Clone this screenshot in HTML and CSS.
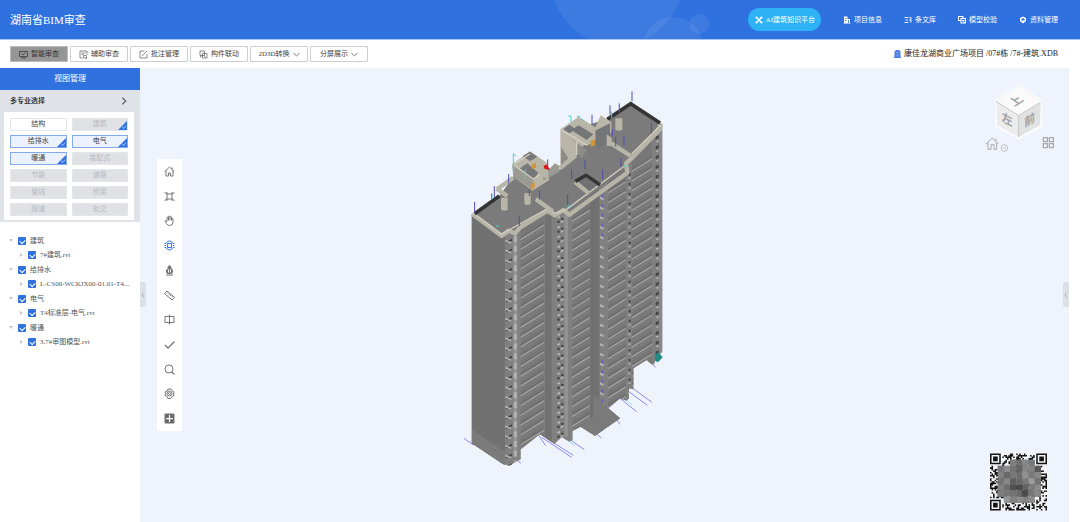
FILE: index.html
```html
<!DOCTYPE html>
<html lang="zh-CN">
<head>
<meta charset="utf-8">
<title>湖南省BIM审查</title>
<link rel="stylesheet" href="styles.css">
</head>
<body>
<header class="header">
  <svg class="header-art" width="170" height="39" viewBox="550 0 170 39" aria-hidden="true"><g fill="#fff" fill-opacity=".07"><circle cx="617" cy="-21" r="66"/><circle cx="673" cy="47" r="30"/><circle cx="699" cy="24" r="10"/></g></svg>
  <h1 class="brand">湖南省BIM审查</h1>
  <nav class="nav">
    <a class="nav-item nav-pill" href="#"><svg class="ic8" viewBox="0 0 16 16"><path d="M3 3l10 10M13 3L3 13" stroke="#fff" stroke-width="2.4"/><circle cx="3" cy="3" r="2.2" fill="#fff"/><circle cx="13" cy="3" r="2.2" fill="#fff"/><circle cx="3" cy="13" r="2.2" fill="#fff"/><circle cx="13" cy="13" r="2.2" fill="#fff"/></svg>AI建筑知识平台</a>
    <a class="nav-item" href="#"><svg class="ic8" viewBox="0 0 16 16"><path fill="#fff" fill-rule="evenodd" d="M2 1h7v5h5v8h1v1H1v-1h1zM4 4v1.500h3V4zM4 8v1.500h3V8zM10.500 8v6h1.500V8z"/></svg>项目信息</a>
    <a class="nav-item" href="#"><svg class="ic8" viewBox="0 0 16 16" fill="none" stroke="#fff" stroke-width="1.800"><path d="M1 3h8M3 8h5M1 13h8M11 3h3v10M10 8h4"/></svg>条文库</a>
    <a class="nav-item" href="#"><svg class="ic8" viewBox="0 0 16 16" fill="none" stroke="#fff" stroke-width="2.200"><path d="M5 9H1V1h9v3M6 5h9v9H6zM8 9h5M10 12h3"/></svg>模型校验</a>
    <a class="nav-item" href="#"><svg class="ic8" viewBox="0 0 16 16"><path fill="#fff" fill-rule="evenodd" d="M8 1l6 3v6l-6 5-6-5V4zM8 4L5 6v3h6V6z"/></svg>资料管理</a>
  </nav>
</header>
<div class="toolbar">
  <div class="tools">
    <button class="tool tool-on" aria-pressed="true"><svg class="ic9" viewBox="0 0 18 18"><path d="M1 3h16v10H1zM4 16h10M5 7l3 3 5-5"/></svg>智能审查</button>
    <button class="tool"><svg class="ic9" viewBox="0 0 18 18"><path d="M7 16H2V2h14v7M5 6h8M5 9h4M14 16l2 2M9 16V11h6v5z"/></svg>辅助审查</button>
    <button class="tool"><svg class="ic9" viewBox="0 0 18 18"><path d="M11 2H2v14h14V8M6 12L16 2"/></svg>批注管理</button>
    <button class="tool"><svg class="ic9" viewBox="0 0 18 18"><path d="M2 2h9v9H2zM7 7h9v9H7zM5 14H3v-3M9 11l4 3"/></svg>构件联动</button>
    <label class="tool"><select class="pick pick-wide" aria-label="2D3D转换"><option>2D3D转换</option></select><svg class="chev" viewBox="0 0 16 10"><path d="M1 2l7 6 7-6"/></svg></label>
    <label class="tool"><select class="pick" aria-label="分屏展示"><option>分屏展示</option></select><svg class="chev" viewBox="0 0 16 10"><path d="M1 2l7 6 7-6"/></svg></label>
  </div>
  <div class="path"><svg width="7" height="8" viewBox="0 0 14 16"><path fill="#4c80e8" d="M1 3l3-3h6l3 3v11h1v2H0v-2h1z"/><path stroke="#8fb0f2" d="M4 5h6M4 8h6M4 11h6"/></svg>康佳龙湖商业广场项目 /07#栋 /7#-建筑.XDB</div>
</div>
<main class="main">
  <aside class="side">
    <h2 class="side-title">视图管理</h2>
    <section class="majors">
      <button class="majors-head">多专业选择<svg width="6" height="8" viewBox="0 0 10 14"><path d="M2 1l6 6-6 6" fill="none" stroke="#555" stroke-width="2"/></svg></button>
      <div class="chips">
        <button class="chip">结构</button><button class="chip off marked">建筑</button>
        <button class="chip on marked">给排水</button><button class="chip on marked">电气</button>
        <button class="chip on marked">暖通</button><button class="chip off">装配式</button>
        <button class="chip off">节能</button><button class="chip off">道路</button>
        <button class="chip off">管线</button><button class="chip off">桥梁</button>
        <button class="chip off">隧道</button><button class="chip off">轨交</button>
      </div>
    </section>
    <ul class="tree">
      <li><label class="row"><i class="tri down"></i><input type="checkbox" checked><span>建筑</span></label>
        <label class="row child"><i class="tri"></i><input type="checkbox" checked><span>7#建筑.rvt</span></label></li>
      <li><label class="row"><i class="tri down"></i><input type="checkbox" checked><span>给排水</span></label>
        <label class="row child"><i class="tri"></i><input type="checkbox" checked><span>L-CS00-WCKJX00-01.01-T4...</span></label></li>
      <li><label class="row"><i class="tri down"></i><input type="checkbox" checked><span>电气</span></label>
        <label class="row child"><i class="tri"></i><input type="checkbox" checked><span>T4标准层-电气.rvt</span></label></li>
      <li><label class="row"><i class="tri down"></i><input type="checkbox" checked><span>暖通</span></label>
        <label class="row child"><i class="tri"></i><input type="checkbox" checked><span>3.7#审图模型.rvt</span></label></li>
    </ul>
  </aside>
  <section class="stage" aria-label="模型视图">
    <button class="handle handle-left" aria-label="收起"><svg width="4" height="6" viewBox="0 0 8 12"><path d="M6 1L2 6l4 5" fill="none" stroke="#999" stroke-width="1.500"/></svg></button>
    <div class="palette">
      <button aria-label="主页"><svg viewBox="0 0 22 22"><path d="M1.500 11L11 2l9.500 9M4 9v11h5v-6h4v6h5V9M16 3v4"/></svg></button>
      <button aria-label="适应窗口"><svg viewBox="0 0 22 22"><path d="M6 6h10v10H6zM1 3l5 3 0-4M21 3l-5 3V2M1 19l5-3v4M21 19l-5-3v4"/></svg></button>
      <button aria-label="平移"><svg viewBox="0 0 22 22"><path d="M6 13V6q0-2 1.500-2T9 6V4q0-2 1.500-2T12 4v1q0-2 1.500-2T15 5v3q0-2 1.500-2T18 8v6q0 7-7 7-4 0-6-4l-3-4q0-3 4 0M9 6v5M12 5v6M15 8v3"/></svg></button>
      <button class="active" aria-label="旋转"><svg viewBox="0 0 22 22"><path d="M7 7h8v8H7zM1 7h3Q6 2 11 2t7 5h3M21 15h-3q-2 5-7 5t-7-5H1M1 11h3M18 11h3"/></svg></button>
      <button aria-label="漫游"><svg viewBox="0 0 22 22"><path fill="#777" d="M8 4q3-6 6 0v3l3 3v5H5v-5l3-3z"/><path d="M4 20h14M6 17h10" /><path stroke="#fff" d="M9 9v6M13 9v6"/></svg></button>
      <button aria-label="测量"><svg viewBox="0 0 22 22"><path d="M6 2l15 13-5 5L1 7zM8 5L6 7M11 8l-2 2M14 10l-2 2M17 13l-2 2"/></svg></button>
      <button aria-label="剖切"><svg viewBox="0 0 22 22"><path d="M2 5h18v12H2zM11 1v20"/></svg></button>
      <button aria-label="确认"><svg viewBox="0 0 22 22"><path stroke-width="2.500" d="M2 12l6 6L21 5"/></svg></button>
      <button aria-label="搜索"><svg viewBox="0 0 22 22"><circle cx="10" cy="10" r="8"/><path stroke-width="2.500" d="M15 16l6 5"/></svg></button>
      <button aria-label="设置"><svg viewBox="0 0 22 22"><path d="M8 2h6l2 3 4 3-1 4 1 3-4 2-3 4H8l-2-4-4-2 1-4-1-3 4-2z"/><circle cx="11" cy="11" r="5"/><circle cx="11" cy="11" r="2"/></svg></button>
      <button aria-label="更多"><svg viewBox="0 0 22 22"><path fill="#666" d="M2 2h18v18H2z"/><path stroke="#fff" stroke-width="2.500" d="M11 4v14M4 11h14"/></svg></button>
    </div>
    <svg class="building" width="230" height="400" viewBox="0 0 690 1200" role="img" aria-label="7#建筑模型">
      <defs><clipPath id="body"><path id="shape" d="M65 402L155 470 200 450 310 395 355 390 545 232 637 130V815L615 835V848L608 855 590 840 550 865V928L537 925V955L530 962 510 955 475 985 510 1015 435 1068 392 1040 367 1053V1080L358 1085 335 1072 313 1092 270 1062 212 1108V1138L178 1157 160 1153 65 1090Z"/></clipPath></defs>
      <g stroke="#8d88ec" stroke-width="3"><path d="M42 1075l28 20M262 1060l25 37M270 1062l100 64M275 1072l90 60M355 1075l48 34M510 955l50 40M537 935l55 41M548 925l58 42M500 1018l10 15M440 1062l14 12M605 848l12 14M203 1142l10 8"/><path stroke="#83dfe5" d="M353 1080l20 16M530 960l16 14"/></g>
      <use href="#shape" fill="#808080"/>
      <g clip-path="url(#body)">
        <path fill="#717171" d="M60 390L165 470V1165L60 1095zM420 330h28v690h-28zM285 400h20v700h-20z"/>
        <path fill="#7b7b7b" d="M65 1048L165 1115V1165L60 1095z"/>
        <g id="floors"></g>
        <path fill="#7a7a7a" d="M430 945L510 1015 435 1068 392 1040 430 1010z"/>
        <path fill="#888" d="M628 130h9v720h-9z"/>
      </g>
      <path d="M614 825l12-8 12 15-14 15-9-5z" fill="#238b86"/>
      <path fill="#7b7b7b" d="M68 402L150 345 190 290 330 268 380 225V150L430 130 475 115 542 70 633 130 545 232 527 262 355 398 310 400 200 452 155 468z"/>
      <path fill="none" stroke="#b7b5a7" stroke-width="13" stroke-linejoin="round" d="M68 403L155 468 175 452 195 460 210 443 292 392 315 406 340 390 358 404 532 278 528 250 548 232 630 148V132"/>
      <path fill="none" stroke="#d0cdbf" stroke-width="4" d="M68 398L155 462 292 386 315 400 350 388 523 258M545 222L632 136M258 355L310 391M330 268L378 228M484 190L544 225"/>
      <path fill="none" stroke="#b7b5a7" stroke-width="13" d="M258 358L308 394M330 264L378 226M484 190L542 228M141 328L190 293M140 326L172 348M375 306L418 340"/>
      <path fill="none" stroke="#343434" stroke-width="11" d="M74 401L148 348M472 118L542 71 630 129M376 304L408 286 450 315"/>
      <path fill="#707173" d="M386 306L408 292 442 315 418 333z"/>
      <path fill="#b9b6a9" d="M187 252L240 214 290 248 298 300 248 332 190 290z"/>
      <path fill="#77787a" d="M218 228L240 215 262 230 240 244zM210 265L232 250 265 278 250 300z"/>
      <path fill="#9b9a92" d="M187 252l63 45v33l-60-40zM300 265L315 250 328 258V275L280 302 277 275z"/>
      <path fill="none" stroke="#d3d0c1" stroke-width="4" d="M187 252L250 297 268 285M195 250L240 222"/>
      <path fill="#b9b6a9" d="M331 148L386 110 436 142 452 106 484 126V160L436 150V175L380 211V225L331 255z"/>
      <path fill="#747577" d="M340 148L358 134 377 148 358 160zM364 150L385 136 430 163 410 180zM440 150L480 130V190L440 205z"/>
      <path fill="#8d8d88" d="M350 165L410 210 395 235 380 220V190zM333 200L355 235 333 255z"/>
      <path fill="none" stroke="#d3d0c1" stroke-width="4" d="M331 148L410 195 436 178M380 182V225"/>
      <path fill="#b7b5a7" d="M153 353h20v36q-10 6-20 0zM223 340h19v32q-9 6-19 0zM496 115h21v34q-10 6-21 0zM470 163l15 10v25h-15zM275 262l20 10v25l-20-8z"/>
      <path fill="#cf963b" d="M246 252l12-4v15l-12 4zM242 313l12-7v17l-12 6zM422 182l13-4v18l-13 4z"/>
      <path fill="#db1414" d="M281 258l10-5 9 17-17-4z"/>
      <path fill="none" stroke="#514eb1" stroke-width="3" d="M74 366v32M133 318v34M125 340v20M176 282v28M208 408v30M238 328v20M269 333v25M353 343v35M365 267v30M405 240v28M458 268v30M293 238v30M426 104v30M480 76v28M508 70v28M546 34v30M487 148v22M497 172v28M522 168v30M513 233v28M604 128v32"/>
      <path fill="none" stroke="#4ed0d0" stroke-width="3" d="M190 220v55M190 222l8 6M226 268v30M355 108h8v18M381 110h10M485 95v20M138 438h10M350 378h14M521 258h12M126 346v12M396 117l6 8"/>
    </svg>
    <svg class="cube" width="80" height="80" viewBox="40 20 240 240" role="img" aria-label="视图方向">
      <path fill="#fff" fill-opacity=".6" d="M148 27L218 75V155L147 192 77 155V75z"/>
      <path fill="#fafafa" stroke="#ddd" d="M148 31L213 80 147 120 80 78z"/>
      <path fill="#ececec" d="M80 80L147 121V185L83 150z"/><path fill="#e2e2e2" d="M147 121L213 82 211 149 147 185z"/>
      <path fill="none" stroke="#b4b4b4" stroke-width="2" d="M80 79L147 121 213 81M147 121V185"/>
      <g class="cube-text"><text transform="matrix(.85 -.55 .8 .55 134 94)">上</text><text transform="matrix(.9 .45 0 1 96 137)">左</text><text transform="matrix(.9 -.5 0 1 164 156)">前</text></g>
      <g fill="none" stroke="#aaa" stroke-width="3"><path d="M49 206L68 188 86 206M55 202V222H64V208H73V222H81V202M79 190v8"/><circle cx="104" cy="218" r="10" stroke-width="2"/><path d="M99 216l5 4 5-4" stroke-width="2"/><path stroke-width="4" d="M221 187h12v12h-12zM239 187h12v12h-12zM221 205h12v12h-12zM239 205h12v12h-12z"/></g>
    </svg>
    <button class="handle handle-right" aria-label="展开"><svg width="4" height="6" viewBox="0 0 8 12"><path d="M6 1L2 6l4 5" fill="none" stroke="#aaa" stroke-width="1.500"/></svg></button>
    <svg class="qr" width="57" height="58" viewBox="0 0 37 37" role="img" aria-label="二维码"></svg>
  </section>
</main>
<script src="app.js"></script>
</body>
</html>
```
FILE: styles.css
```css
* { box-sizing: border-box; }
body {
  margin: 0;
  min-height: 100vh;
  display: flex;
  flex-direction: column;
  background: #fff;
  color: #444;
  font: 7px/10px "Liberation Serif", "Noto Sans CJK SC", serif;
}
button, select, input { font: inherit; color: inherit; margin: 0; }
button { padding: 0; border: 0; background: none; }
h1, h2, ul { margin: 0; padding: 0; font-weight: 400; list-style: none; }
svg { flex: none; display: block; }
.header {
  position: relative;
  height: 40px;
  padding: 0 22px 0 10px;
  display: flex;
  align-items: center;
  justify-content: space-between;
  background: #2f71df;
  border-bottom: 1px solid #a9c6f5;
  color: #fff;
}
.header-art { position: absolute; left: 550px; top: 0; }
.brand { font-size: 11px; line-height: 16px; }
.nav { position: relative; display: flex; align-items: center; gap: 22px; }
.nav-item { display: flex; align-items: center; gap: 3px; color: #fff; text-decoration: none; white-space: nowrap; }
.nav-pill { height: 23px; padding: 0 6px 0 7px; border-radius: 12px; background: #2db2f5; }
.ic8 { width: 8px; height: 8px; }
.ic9 { width: 9px; height: 9px; fill: none; stroke: #666; stroke-width: 1.5; }
.toolbar { height: 28px; padding: 0 22px 0 10px; display: flex; align-items: center; justify-content: space-between; }
.tools { display: flex; gap: 2px; }
.tool {
  width: 58px;
  height: 16px;
  display: flex;
  align-items: center;
  justify-content: center;
  gap: 3px;
  border: 1px solid #ccced2;
  border-radius: 1px;
  background: #fff;
  white-space: nowrap;
}
.tool-on { background: #969696; border-color: #bbb; color: #333; }
.tool-on .ic9 { stroke: #333; }
.pick { width: 28px; padding: 0; border: 0; background: none; appearance: none; }
.pick-wide { width: 31px; }
.chev { width: 7px; height: 5px; fill: none; stroke: #666; stroke-width: 2; }
.path { display: flex; align-items: center; gap: 3px; font-size: 8px; color: #222; white-space: nowrap; }
.main { flex: 1; display: flex; padding-right: 11px; }
.side { width: 140px; flex: none; }
.side-title { height: 22px; background: #2f71df; color: #fff; font-size: 8px; line-height: 22px; text-align: center; }
.majors { padding: 0 6px 2px 4px; background: #dfe3e8; }
.majors-head { width: 100%; height: 22px; padding: 0 7px 0 6px; display: flex; align-items: center; justify-content: space-between; color: #222; font-weight: 500; }
.chips { display: grid; grid-template-columns: 1fr 1fr; gap: 4px 5px; padding: 6px 6px 4px; background: #fff; }
.chip { position: relative; height: 13px; border: 1px solid #e4e6e9; line-height: 11px; text-align: center; }
.off { background: #dfe1e5; color: #b8bbc2; }
.on { background: #ebf1fd; border-color: #82a8ed; }
.marked::before { content: ""; position: absolute; right: 0; bottom: 0; border-style: solid; border-width: 0 0 9px 9px; border-color: transparent transparent #2f71df; }
.marked::after { content: ""; position: absolute; right: 1px; bottom: 2px; width: 3px; height: 2px; border: solid #8fb3f5; border-width: 0 0 1px 1px; transform: rotate(-45deg); }
.tree { padding: 11px 8px 0; }
.row { height: 15px; display: flex; align-items: center; gap: 4px; color: #555; white-space: nowrap; }
.child { height: 14px; padding-left: 10px; }
.tri { width: 6px; height: 6px; padding: 1px; display: flex; justify-content: center; }
.tri::before { content: ""; border: 2px solid transparent; border-left: 3px solid #c4c7cc; border-right: 0; }
.down::before { border: 2px solid transparent; border-top: 3px solid #c4c7cc; border-bottom: 0; }
.row input { appearance: none; position: relative; width: 8px; height: 8px; flex: none; border-radius: 1px; background: #2f71df; }
.row input::after { content: ""; position: absolute; left: 2px; top: 2px; width: 4px; height: 3px; border: solid #fff; border-width: 0 0 1px 1px; transform: rotate(-45deg); }
.stage { position: relative; flex: 1; min-height: 454px; background: #eff4fc; overflow: hidden; }
.handle { position: absolute; top: 214px; width: 6px; height: 25px; display: flex; align-items: center; justify-content: center; background: #dcdfe5; }
.handle-left { left: 0; border-radius: 0 3px 3px 0; }
.handle-right { right: 0; border-radius: 3px 0 0 3px; }
.palette { position: absolute; left: 17px; top: 91px; width: 25px; height: 272px; display: flex; flex-direction: column; background: #fff; }
.palette button { flex: 1; display: flex; align-items: center; justify-content: center; }
.palette svg { width: 11px; height: 11px; fill: none; stroke: #777; stroke-width: 2; }
.palette .active svg { stroke: #3c79e4; }
.building { position: absolute; left: 310px; top: 12px; }
.cube { position: absolute; right: 6px; top: 14px; }
.cube-text { font-family: "Noto Sans CJK SC", sans-serif; font-size: 36px; font-weight: 700; fill: #a2a2a2; }
.qr { position: absolute; right: 22px; bottom: 11px; }
```
FILE: app.js
```js
const NS = 'http://www.w3.org/2000/svg';
function add(parent, tag, attrs) {
  const el = document.createElementNS(NS, tag);
  for (const k in attrs) el.setAttribute(k, attrs[k]);
  parent.appendChild(el);
}

// Facade: balcony bands and window columns repeated on every floor
const floors = document.getElementById('floors');
const bands = [[212, 283, 455], [366, 419, 400], [474, 527, 315], [546, 606, 250]];
for (const [x1, x2] of bands) add(floors, 'path', { d: `M${x1} 100H${x2}V1150H${x1}z`, fill: '#777' });
add(floors, 'path', { d: 'M190 440h12v680h-12zM343 400h11v670h-11z', fill: '#929292' });
let light = '', pale = '', dark = '', deep = '', white = '', blue = '';
for (let i = 0; i < 27; i++) {
  const f = i * 29.3;
  for (const [x1, x2, y] of bands) {
    const rise = (x2 - x1) * 0.62;
    light += `M${x1} ${y + f + 24}L${x2} ${y + f + 24 - rise}`;
    pale += `M${x1} ${y + f + 33}L${x2} ${y + f + 33 - rise}`;
    dark += `M${x1} ${y + f + 17}L${x2} ${y + f + 17 - rise}`;
  }
  deep += `M168 ${486 + f}l18 -10v6l-18 8zM322 ${422 + f}h7v7h-7zM333 ${414 + f}h8v5h-8zM536 ${280 + f}h6v7h-6zM617 ${170 + f}l9 -4v9l-9 4z`;
  white += `M166 ${479 + f}l18 8v4l-18 -6zM321 ${412 + f}l9 -4v7h-9zM332 ${424 + f}l8 -4v6l-8 4zM450 ${350 + f}l11 5v6l-11 -4zM535 ${292 + f}h6v5h-6zM618 ${182 + f}h8v4h-8zM192 ${468 + f}h8v18h-8z`;
  if (i < 5 || i > 16) blue += `M457 ${343 + f}v9`;
}
add(floors, 'path', { d: dark, stroke: '#6a6a6a', 'stroke-width': 3 });
add(floors, 'path', { d: pale, stroke: '#8d8d8d', 'stroke-width': 2, 'stroke-dasharray': '9 4' });
add(floors, 'path', { d: light, stroke: '#a0a0a0', 'stroke-width': 4 });
add(floors, 'path', { d: deep, fill: '#444' });
add(floors, 'path', { d: white, fill: '#b4b5b3' });
add(floors, 'path', { d: blue, stroke: '#5553b8', 'stroke-width': 3 });

// QR code with a mosaic over its centre
const qr = document.querySelector('.qr');
add(qr, 'path', { d: 'M0 0h37v37H0z', fill: '#f4f5f7' });
let seed = 7, cells = '';
const rnd = () => (seed = (seed * 16807) % 2147483647) / 2147483647;
for (let y = 0; y < 37; y++) for (let x = 0; x < 37; x++) {
  const corner = (x < 8 && y < 8) || (x > 28 && y < 8) || (x < 8 && y > 28);
  if (rnd() < 0.5 && !corner) cells += `M${x} ${y}h1v1h-1z`;
}
for (const [x, y] of [[0, 0], [30, 0], [0, 30]])
  cells += `M${x} ${y}h7v7h-7zM${x + 1} ${y + 1}v5h5v-5zM${x + 2} ${y + 2}h3v3h-3z`;
add(qr, 'path', { d: cells, fill: '#151515' });
const tones = [
  [0, 0, 125, 110, 135, 120, 0], [120, 140, 115, 100, 135, 130, 90],
  [130, 105, 120, 110, 145, 120, 135], [115, 135, 95, 105, 120, 155, 115],
  [130, 110, 80, 75, 100, 125, 140], [125, 120, 115, 105, 75, 120, 135],
  [0, 150, 130, 140, 130, 140, 0]
];
tones.forEach((row, j) => row.forEach((t, i) => {
  if (t) add(qr, 'rect', { x: 5 + i * 4, y: 4 + j * 4, width: 4.1, height: 4.1, fill: `rgb(${t},${t},${t})` });
}));
```
